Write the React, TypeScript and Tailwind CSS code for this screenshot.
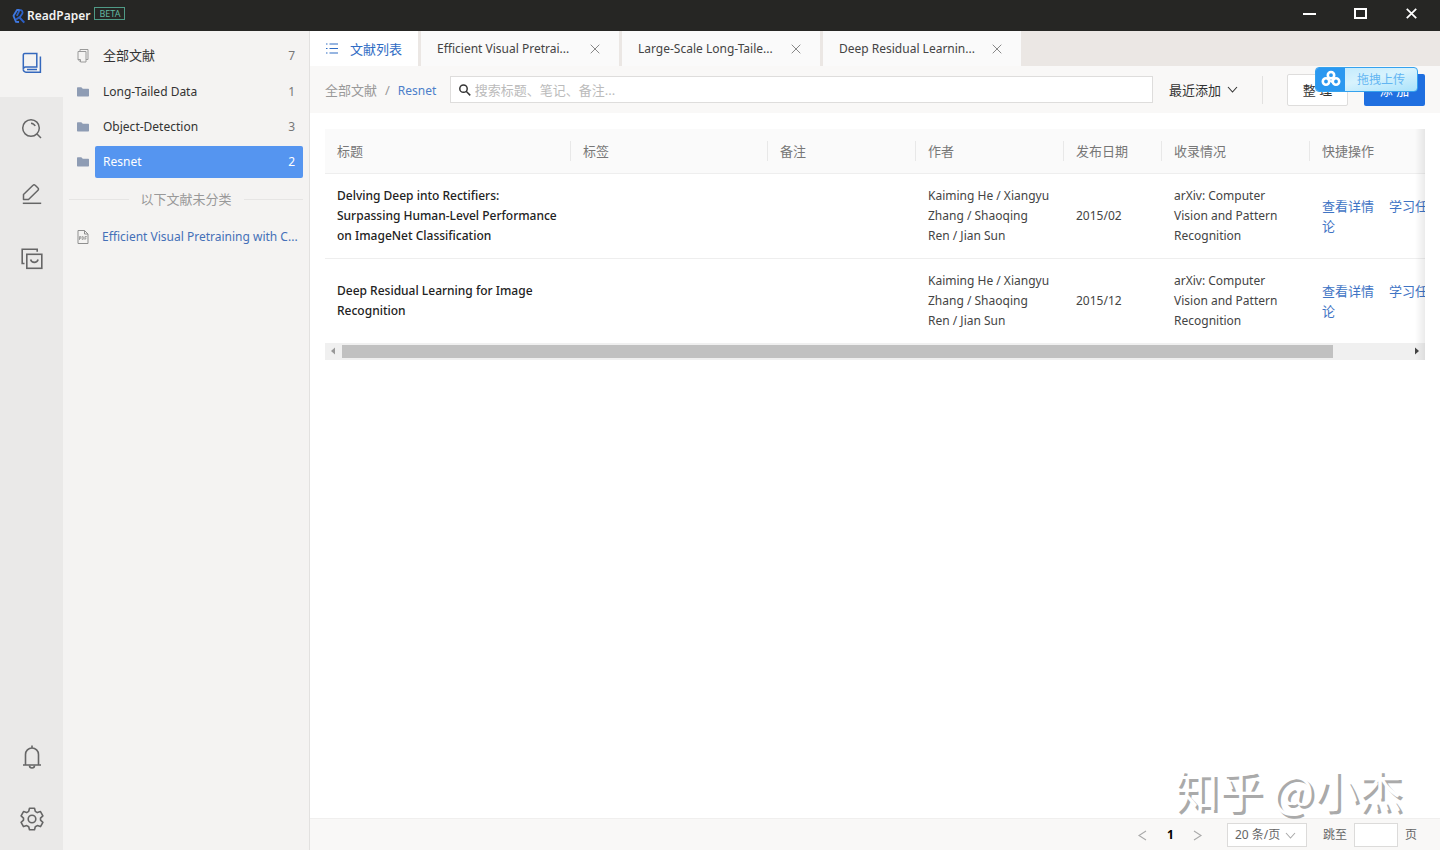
import React from "react";

const NAV_ITEM = "flex w-full items-center justify-center pb-0.5 text-[#666]";

type Folder = { name: string; count: number; kind: "all" | "folder"; active?: boolean };

const folders: Folder[] = [
  { name: "全部文献", count: 7, kind: "all" },
  { name: "Long-Tailed Data", count: 1, kind: "folder" },
  { name: "Object-Detection", count: 3, kind: "folder" },
  { name: "Resnet", count: 2, kind: "folder", active: true },
];

const tabs = ["Efficient Visual Pretrai...", "Large-Scale Long-Taile...", "Deep Residual Learnin..."];

const columns = [
  { label: "标题", width: "w-[246px]" },
  { label: "标签", width: "w-[197px]" },
  { label: "备注", width: "w-[148px]" },
  { label: "作者", width: "w-[148px]" },
  { label: "发布日期", width: "w-[98px]" },
  { label: "收录情况", width: "w-[148px]" },
  { label: "快捷操作", width: "w-[197px]" },
];

const papers = [
  {
    title: "Delving Deep into Rectifiers: Surpassing Human-Level Performance on ImageNet Classification",
    authors: "Kaiming He / Xiangyu Zhang / Shaoqing Ren / Jian Sun",
    date: "2015/02",
    venue: "arXiv: Computer Vision and Pattern Recognition",
  },
  {
    title: "Deep Residual Learning for Image Recognition",
    authors: "Kaiming He / Xiangyu Zhang / Shaoqing Ren / Jian Sun",
    date: "2015/12",
    venue: "arXiv: Computer Vision and Pattern Recognition",
  },
];

function Logo() {
  return (
    <svg width="14" height="16" viewBox="0 0 14 16" fill="none" strokeLinejoin="round" aria-hidden="true">
      <path d="M4.800 7.800 7.600 2.200C9.800 1.600 11.200 3.600 10.300 5.600L7.300 10" stroke="#2c62c8" strokeWidth="1.800" />
      <path d="M7.600 1.800 5 2 1.500 7.800 4 13.800 7 14" stroke="#3f78e0" strokeWidth="1.800" />
      <path d="M4 11.500 7.300 9.200 12.300 14.600" stroke="#2c5fc4" strokeWidth="2" />
    </svg>
  );
}

function BookIcon() {
  return (
    <svg width="20" height="22" viewBox="0 0 20 22" fill="none" stroke="#3468bd" strokeWidth="1.500" aria-hidden="true">
      <path d="M3 1.500h11.800v13.500H3.500a2.200 2.200 0 0 0-2.200 2.200V3A1.500 1.500 0 0 1 3 1.500Z" />
      <path d="M1.300 17.200A2.800 2.800 0 0 0 4 20.200h14.400V4.500" />
      <path d="M5 17.500h10" />
    </svg>
  );
}

function SearchNavIcon() {
  return (
    <svg width="22" height="22" viewBox="0 0 22 22" fill="none" stroke="currentColor" strokeWidth="1.500" aria-hidden="true">
      <circle cx="10" cy="10" r="8.300" />
      <path d="m16 16 4 4M10 5.200a5 5 0 0 1 4.200 2.800" />
    </svg>
  );
}

function PenIcon() {
  return (
    <svg width="20" height="22" viewBox="0 0 20 22" fill="none" stroke="currentColor" strokeWidth="1.500" aria-hidden="true">
      <path d="M1.500 16.500v-5L11 2.200a1.500 1.500 0 0 1 2.200 0l2.800 2.800a1.500 1.500 0 0 1 0 2.200L6.500 16.500Z" strokeLinejoin="round" />
      <path d="M.8 20.300h18.400" />
    </svg>
  );
}

function BoxIcon() {
  return (
    <svg width="22" height="22" viewBox="0 0 22 22" fill="none" stroke="currentColor" strokeWidth="1.600" aria-hidden="true">
      <path d="M3.500 15.500H1.200V1.300h15v2.500" />
      <rect x="5.800" y="6.300" width="15" height="14" />
      <path d="M9.600 11.500a3.900 3.900 0 0 0 7.500 0" />
    </svg>
  );
}

function BellIcon() {
  return (
    <svg width="20" height="24" viewBox="0 0 20 24" fill="none" stroke="currentColor" strokeWidth="1.600" aria-hidden="true">
      <path d="M3.500 20V9.500a6.500 6.500 0 0 1 13 0V20M1 20h18M10 3V.5" />
      <path d="M7.500 20.500a2.500 2.500 0 0 0 5 0" />
    </svg>
  );
}

function GearIcon() {
  return (
    <svg width="24" height="24" viewBox="0 0 24 24" fill="none" stroke="currentColor" strokeWidth="1.600" strokeLinejoin="round" aria-hidden="true">
      <path d="M9.500 1.200h5l.8 3.200 2 1.200 3.200-1 2.400 4.300-2.400 2.200v2l2.400 2.200-2.400 4.300-3.200-1-2 1.200-.8 3h-5l-.8-3-2-1.200-3.200 1-2.400-4.300 2.400-2.200v-2L1.100 8.900l2.400-4.300 3.200 1 2-1.200Z" />
      <circle cx="12" cy="12" r="3.800" />
    </svg>
  );
}

function CopyIcon() {
  return (
    <svg width="12" height="14" viewBox="0 0 12 14" fill="none" stroke="#9a9a9a" aria-hidden="true">
      <path d="M3 2.500V.5h8v10H9" />
      <path d="M1 2.500h8v10.500H3.500L1 10.500ZM1 10.500h2.500V13" />
    </svg>
  );
}

function FolderIcon() {
  return (
    <svg width="12" height="10" viewBox="0 0 12 10" aria-hidden="true">
      <path d="M0 1a.7.7 0 0 1 .7-.7h3.600l1.500 1.500h5.500a.7.7 0 0 1 .7.7v6.300a.7.7 0 0 1-.7.7H.7a.7.7 0 0 1-.7-.7Z" fill="#8e9cb4" />
    </svg>
  );
}

function PdfIcon() {
  return (
    <svg width="12" height="14" viewBox="0 0 12 14" fill="none" stroke="#8f8f8f" aria-hidden="true">
      <path d="M1 .5h6.500L11 4v9.500H1ZM7.500.5V4H11" />
      <path d="M2.500 10V6.500h1.300v1.800H2.500M5.200 6.500v3h.8c1.200-.5 1.200-2.500 0-3ZM8 10V6.500h1.800M8 8.200h1.500" strokeWidth=".8" />
    </svg>
  );
}

function Chevron({ dir, className }: { dir: "down" | "left" | "right"; className: string }) {
  const d = { down: "M1 3l4.500 5L10 3", left: "M9 1 2 5.500 9 10", right: "M2 1l7 4.500L2 10" }[dir];
  return (
    <svg width="11" height="11" viewBox="0 0 11 11" fill="none" stroke="currentColor" strokeWidth="1.100" className={className} aria-hidden="true">
      <path d={d} />
    </svg>
  );
}

function Cross({ size, width }: { size: number; width: number }) {
  return (
    <svg width={size} height={size} viewBox="0 0 10 10" fill="none" stroke="currentColor" strokeWidth={width} aria-hidden="true">
      <path d="m.7.7 8.600 8.600M9.300.7.7 9.300" />
    </svg>
  );
}

function TitleBar() {
  return (
    <header className="flex h-[31px] shrink-0 items-center bg-[#262624] text-white">
      <div className="flex items-center pl-3">
        <Logo />
        <span className="pl-px text-xs leading-4 font-semibold text-[#f2f2f2]">ReadPaper</span>
        <span className="-mt-1 ml-1 flex h-[13px] w-[31px] items-center justify-center border border-[#4f9a86] text-[9px] leading-none text-[#62b8a0]">
          BETA
        </span>
      </div>
      <div className="-mt-1 ml-auto flex pr-[3px]">
        <button aria-label="Minimize" className="flex h-7 w-[51px] items-center justify-center">
          <span className="h-0.5 w-[13px] bg-white" />
        </button>
        <button aria-label="Maximize" className="flex h-7 w-[51px] items-center justify-center">
          <span className="h-[11px] w-[13px] border-2 border-white" />
        </button>
        <button aria-label="Close" className="flex h-7 w-[51px] items-center justify-center">
          <Cross size={11} width={1.6} />
        </button>
      </div>
    </header>
  );
}

function NavRail() {
  return (
    <nav className="flex w-[63px] shrink-0 flex-col bg-[#eae9e8]">
      <button aria-label="文献" className={NAV_ITEM + " h-[66px] bg-[#f4f3f2]"}><BookIcon /></button>
      <button aria-label="搜索" className={NAV_ITEM + " h-[65px]"}><SearchNavIcon /></button>
      <button aria-label="笔记" className={NAV_ITEM + " h-[65px]"}><PenIcon /></button>
      <button aria-label="收集" className={NAV_ITEM + " h-[65px]"}><BoxIcon /></button>
      <button aria-label="通知" className={NAV_ITEM + " mt-auto h-16"}><BellIcon /></button>
      <button aria-label="设置" className={NAV_ITEM + " h-[60px]"}><GearIcon /></button>
    </nav>
  );
}

function Sidebar() {
  return (
    <aside className="w-[247px] shrink-0 border-r border-[#e2e1e0] bg-[#f4f3f2] pt-[7px] pr-1.5 pl-3.5">
      <ul>
        {folders.map((f) => (
          <li key={f.name} className="flex h-[35px] items-center first:h-9">
            <span className="w-[18px] shrink-0">{f.kind === "all" ? <CopyIcon /> : <FolderIcon />}</span>
            <button
              className={
                "flex h-8 flex-1 items-center justify-between rounded-xs px-2 text-xs " +
                (f.active ? "bg-[#5595f0] text-white" : "text-[#333]")
              }
            >
              <span className={f.kind === "all" ? "text-[13px]" : ""}>{f.name}</span>
              <span className={f.active ? "" : "text-[#777]"}>{f.count}</span>
            </button>
          </li>
        ))}
      </ul>
      <div className="-ml-2 flex h-10 items-center gap-3 text-[#999]">
        <span className="h-px flex-1 bg-[#e6e5e4]" />
        以下文献未分类
        <span className="h-px flex-1 bg-[#e6e5e4]" />
      </div>
      <a href="#paper" className="flex h-9 items-center text-xs text-[#4470b8]">
        <span className="w-[25px] shrink-0"><PdfIcon /></span>
        <span className="whitespace-nowrap">Efficient Visual Pretraining with C...</span>
      </a>
    </aside>
  );
}

function TabBar() {
  return (
    <div className="flex h-[35px] shrink-0 gap-[3px] bg-[#ebe7e4]">
      <button className="flex w-[108px] items-center gap-3 bg-white pl-4 text-[#2f6cc4]">
        <svg width="12" height="11" viewBox="0 0 12 11" stroke="currentColor" strokeWidth="1.100" aria-hidden="true">
          <path d="M3.500 1H12M3.500 5.500H12M3.500 10H12M0 1h1.500M0 5.500h1.500M0 10h1.500" />
        </svg>
        文献列表
      </button>
      {tabs.map((t) => (
        <div key={t} className="flex w-[198px] items-center justify-between bg-[#fafafa] pr-[19px] pl-4 text-xs text-[#444]">
          <button className="whitespace-nowrap">{t}</button>
          <button aria-label="关闭" className="text-[#888]"><Cross size={10} width={1} /></button>
        </div>
      ))}
    </div>
  );
}

function CloudUpload() {
  return (
    <button className="absolute -top-[7px] right-[7px] flex h-[25px] w-[103px] overflow-hidden rounded-sm border border-[#35a2ee] bg-linear-to-br from-[#bde8fd] via-[#d8f3fd] to-[#a9e2fb]">
      <span className="flex h-full w-[29px] items-center justify-center bg-[#2b98f0]">
        <svg width="20" height="18" viewBox="0 0 20 18" fill="none" stroke="#fff" strokeWidth="2.600" aria-hidden="true">
          <circle cx="10" cy="5.200" r="3.200" />
          <circle cx="5" cy="11.500" r="3.200" />
          <circle cx="15" cy="11.500" r="3.200" />
          <path d="m7.500 9.500 5 4M12.500 9.500l-2.500 2" strokeWidth="1.600" />
        </svg>
      </span>
      <span className="flex h-full flex-1 items-center justify-center pt-0.5 text-xs text-[#62b5f2]">拖拽上传</span>
    </button>
  );
}

function Toolbar() {
  return (
    <div className="flex h-[47px] shrink-0 items-center bg-[#f9f8f7] px-[15px]">
      <div className="flex w-[125px] shrink-0 items-baseline gap-2 text-[#999]">
        <a href="#all">全部文献</a>
        <span>/</span>
        <a href="#resnet" className="text-xs text-[#4c7fca]">Resnet</a>
      </div>
      <label className="flex h-[27px] flex-1 items-center gap-1 border border-[#dedddc] bg-white pl-2">
        <svg width="12" height="12" viewBox="0 0 12 12" fill="none" stroke="#333" strokeWidth="1.500" aria-hidden="true">
          <circle cx="4.600" cy="4.600" r="3.800" />
          <path d="m7.300 7.300 4.200 4.200" />
        </svg>
        <input type="text" aria-label="搜索" placeholder="搜索标题、笔记、备注..." className="w-full bg-transparent outline-none placeholder:text-[#bbb]" />
      </label>
      <button className="ml-4 flex shrink-0 items-center gap-1.5 text-[#333]">
        最近添加
        <Chevron dir="down" className="" />
      </button>
      <span className="ml-6 h-7 w-px bg-[#e2e1e0]" />
      <div className="relative ml-6 flex shrink-0 gap-4">
        <button className="h-8 w-[61px] rounded-xs border border-[#dedddc] bg-white text-[#333]">整 理</button>
        <button className="h-8 w-[61px] rounded-xs bg-[#1f6fe0] text-white">添 加</button>
        <CloudUpload />
      </div>
    </div>
  );
}

function PaperTable() {
  return (
    <div className="relative overflow-hidden">
      <table className="w-[1182px] min-w-full table-fixed border-collapse text-left">
        <thead>
          <tr className="h-11 border-b border-[#eeeeee] bg-[#fafafa] text-[#777]">
            {columns.map((c, i) => (
              <th key={c.label} className={c.width + " p-0 font-normal"}>
                <div className="flex h-[22px] items-center justify-between pl-3">
                  {c.label}
                  {i < columns.length - 1 && <span className="h-5 w-px bg-[#e8e8e8]" />}
                </div>
              </th>
            ))}
          </tr>
        </thead>
        <tbody>
          {papers.map((p) => (
            <tr key={p.title} className="border-b border-[#eeeeee] text-xs leading-5 text-[#444] last:border-b-0">
              <td className="px-3 py-3 font-medium text-[#222]">{p.title}</td>
              <td />
              <td />
              <td className="px-3 py-3">{p.authors}</td>
              <td className="px-3 py-3">{p.date}</td>
              <td className="px-3 py-3">{p.venue}</td>
              <td className="py-3 pr-8 pl-3 text-[13px] leading-5 text-[#3f74c4]">
                <a href="#detail" className="mr-[15px]">查看详情</a>
                <a href="#task" className="mr-[15px]">学习任务</a>
                <a href="#discuss">讨论</a>
              </td>
            </tr>
          ))}
        </tbody>
      </table>
      <div className="flex h-[17px] items-center bg-[#f0f0f0] px-[5px]">
        <svg width="6" height="8" viewBox="0 0 6 8" className="shrink-0" aria-hidden="true"><path d="M5 .5v7L1 4Z" fill="#999" /></svg>
        <div className="mx-1.5 h-[13px] flex-1">
          <div className="h-full w-[93%] bg-[#c1c1c1]" />
        </div>
        <svg width="6" height="8" viewBox="0 0 6 8" className="shrink-0" aria-hidden="true"><path d="M1 .5v7L5 4Z" fill="#444" /></svg>
      </div>
      <div className="pointer-events-none absolute inset-y-0 right-0 w-2.5 bg-linear-to-l from-black/8 to-transparent" />
    </div>
  );
}

function Pager() {
  return (
    <footer className="flex h-8 shrink-0 items-center justify-end border-t border-[#f0efee] bg-[#f9f8f7] pt-px pr-[23px] text-xs text-[#666]">
      <button aria-label="上一页" className="text-[#aaa]"><Chevron dir="left" className="" /></button>
      <button className="ml-[17px] w-[11px] font-bold text-black">1</button>
      <button aria-label="下一页" className="ml-4 text-[#aaa]"><Chevron dir="right" className="" /></button>
      <div className="relative ml-6 flex items-center">
        <select aria-label="每页条数" className="h-6 w-20 appearance-none border border-[#dcdbda] bg-white pl-[7px]">
          <option>20 条/页</option>
        </select>
        <Chevron dir="down" className="pointer-events-none absolute right-[11px] text-[#aaa]" />
      </div>
      <label className="ml-4 flex items-center gap-[7px]">
        跳至
        <input type="text" className="h-6 w-11 border border-[#dcdbda] bg-white" />
      </label>
      <span className="ml-[7px]">页</span>
    </footer>
  );
}

export default function App() {
  return (
    <div className="flex h-screen flex-col overflow-hidden bg-white font-['Noto_Sans','Noto_Sans_CJK_SC',sans-serif] text-[13px] leading-5">
      <TitleBar />
      <div className="flex min-h-0 flex-1">
        <NavRail />
        <Sidebar />
        <div className="relative flex min-w-0 flex-1 flex-col">
          <TabBar />
          <Toolbar />
          <main className="min-h-0 flex-1 overflow-hidden px-[15px] pt-4">
            <PaperTable />
          </main>
          <Pager />
          <div className="pointer-events-none absolute right-[38px] bottom-8 font-['Noto_Sans_CJK_SC',sans-serif] text-[44px] leading-[58px] whitespace-nowrap text-white [text-shadow:3px_3px_0_#aaa]">
            知乎 @小杰
          </div>
        </div>
      </div>
    </div>
  );
}
